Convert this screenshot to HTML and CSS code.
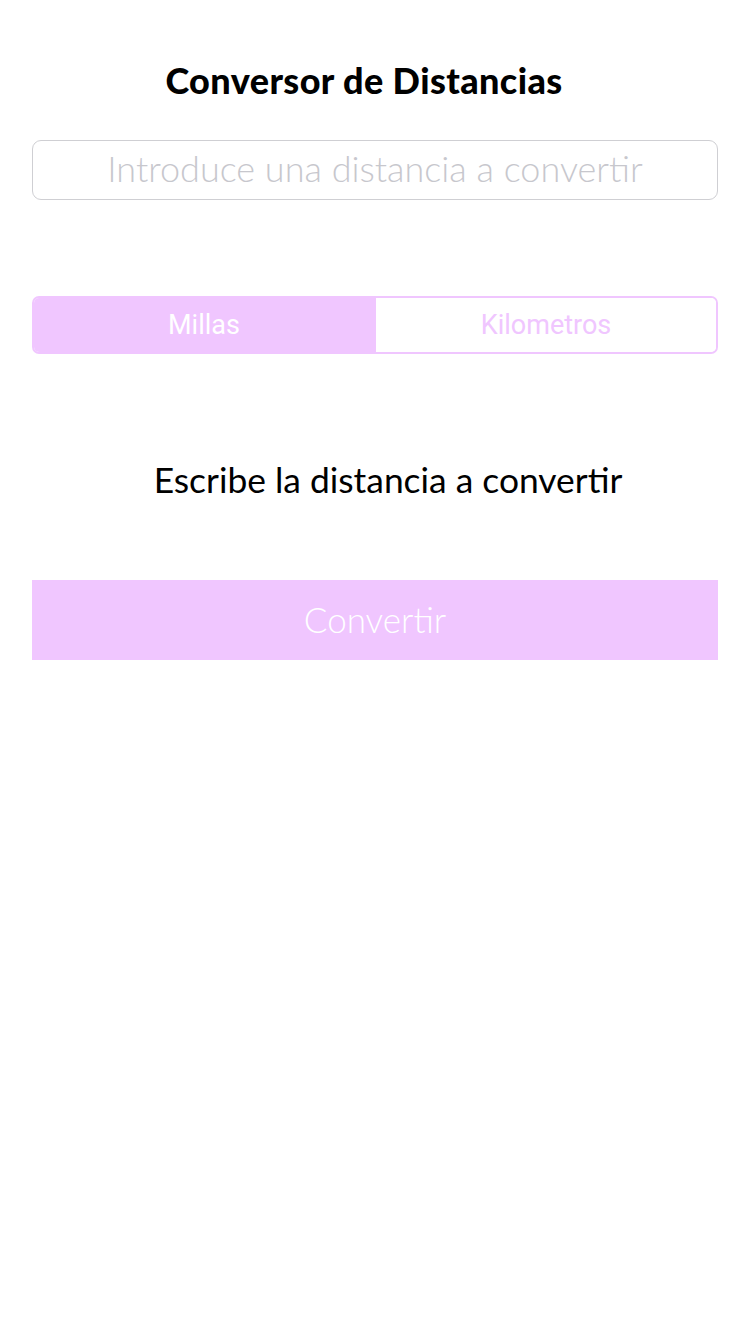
FILE: index.html
```html
<!DOCTYPE html>
<html lang="es">
<head>
<meta charset="utf-8">
<title>Conversor de Distancias</title>
<link rel="stylesheet" href="styles.css">
</head>
<body>
<main class="screen">
  <h1 class="title">Conversor de Distancias</h1>
  <div class="field">Introduce una distancia a convertir</div>
  <div class="segmented">
    <div class="seg seg-on">Millas</div>
    <div class="seg seg-off">Kilometros</div>
  </div>
  <p class="label">Escribe la distancia a convertir</p>
  <div class="button">Convertir</div>
</main>
</body>
</html>
```
FILE: styles.css
```css
html, body {
  margin: 0;
  padding: 0;
  background: #ffffff;
}
.screen {
  width: 750px;
  height: 1322px;
  box-sizing: border-box;
  padding: 56px 32px 0 32px;
  display: flex;
  flex-direction: column;
  font-family: Lato, "Open Sans", sans-serif;
}
.title {
  margin: 0;
  height: 48px;
  line-height: 48px;
  font-size: 36px;
  font-weight: 900;
  letter-spacing: 0.4px;
  text-align: center;
  color: #000;
  padding-right: 22px;
}
.field {
  margin-top: 36px;
  height: 60px;
  box-sizing: border-box;
  border: 1px solid #cfcfd3;
  border-radius: 9px;
  display: flex;
  align-items: center;
  justify-content: center;
  font-size: 36px;
  font-weight: 300;
  color: #c7c7cd;
  padding-bottom: 4px;
}
.segmented {
  margin-top: 96px;
  height: 58px;
  box-sizing: border-box;
  border: 2px solid #f0c6ff;
  border-radius: 7px;
  display: flex;
  overflow: hidden;
  font-family: Roboto, "Liberation Sans", sans-serif;
  font-size: 27px;
}
.seg {
  flex: 1;
  display: flex;
  align-items: center;
  justify-content: center;
}
.seg-on {
  background: #f0c6ff;
  color: #ffffff;
  padding-right: 2px;
}
.seg-off {
  background: #ffffff;
  color: #f0c6ff;
}
.label {
  margin: 104px 0 0 0;
  height: 44px;
  line-height: 44px;
  font-size: 35.4px;
  font-weight: 400;
  text-align: center;
  color: #000;
  padding-left: 26px;
}
.button {
  margin-top: 78px;
  height: 80px;
  background: #f0c6ff;
  color: #ffffff;
  display: flex;
  align-items: center;
  justify-content: center;
  font-size: 35px;
  font-weight: 300;
  padding-bottom: 2px;
  box-sizing: border-box;
}
```
